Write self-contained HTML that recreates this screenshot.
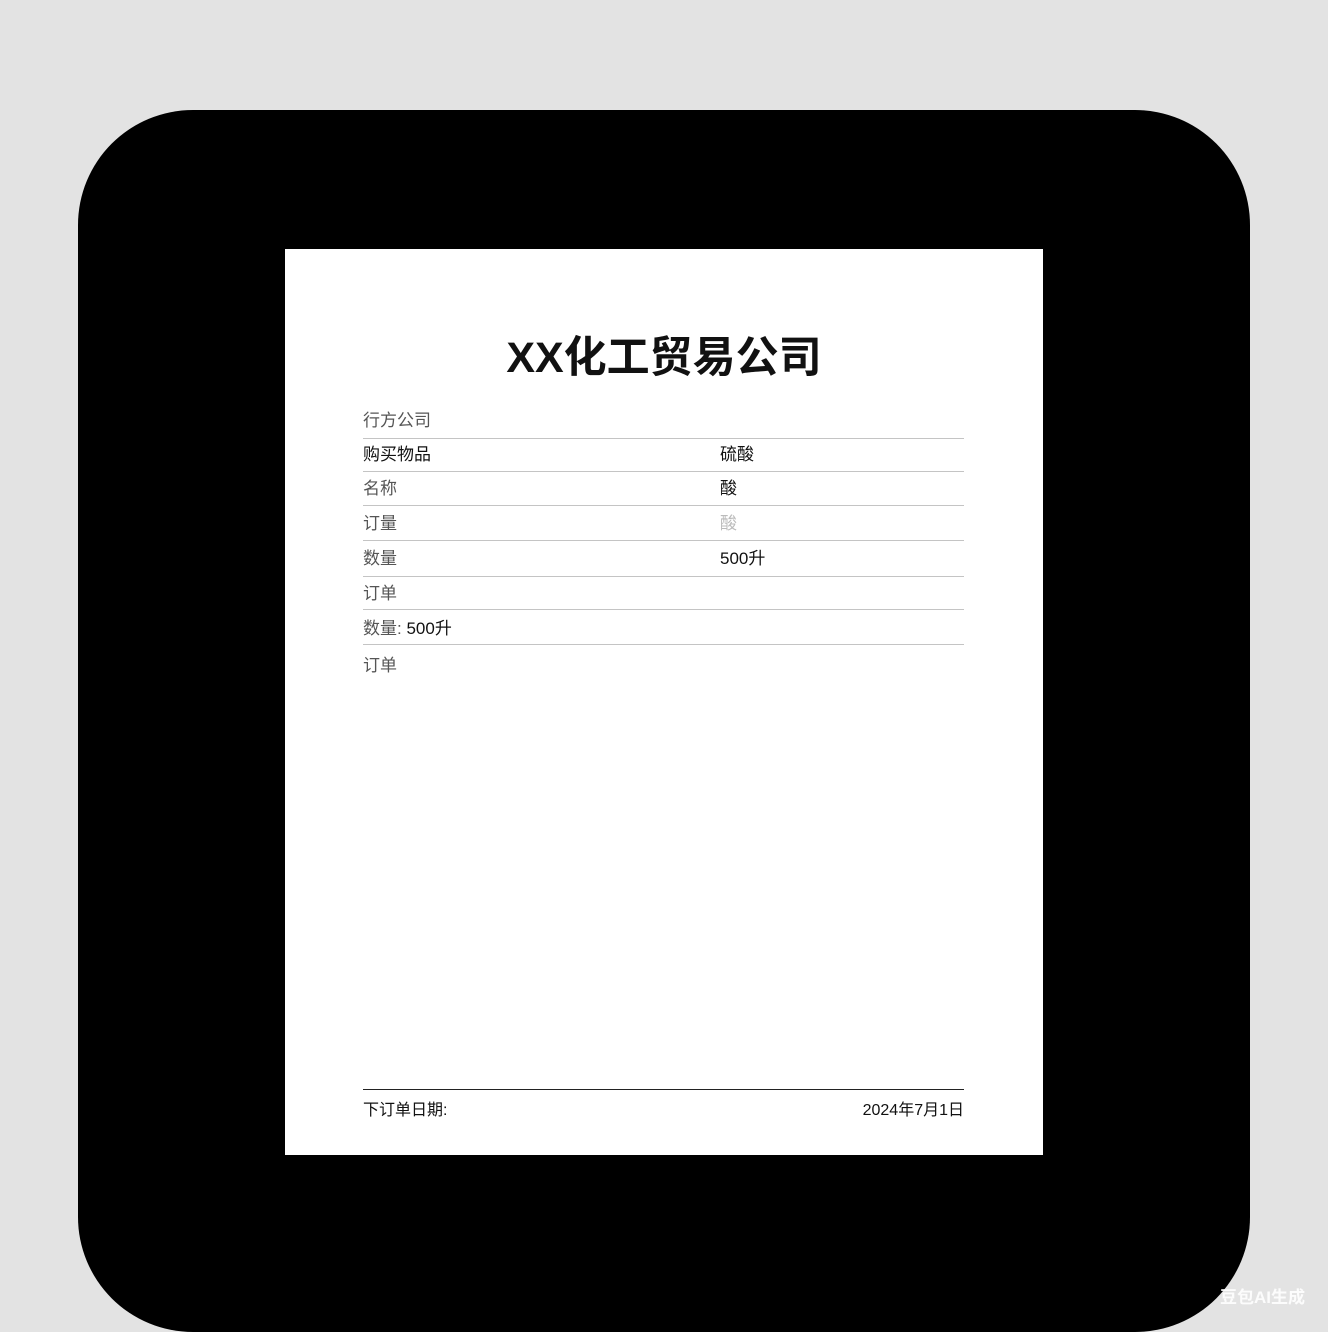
<!DOCTYPE html>
<html><head><meta charset="utf-8"><style>
body{margin:0;width:1328px;height:1328px;background:#e3e3e3;position:relative;overflow:hidden;font-family:"Liberation Sans","Noto Sans CJK SC",sans-serif}
.blk{position:absolute;left:78px;top:110px;width:1172px;height:1222px;background:#000;border-radius:115px}
.paper{position:absolute;left:285px;top:249px;width:758px;height:906px;background:#fff}
.t{position:absolute;left:0;width:100%;top:74px;text-align:center;font-size:43px;font-weight:bold;color:#111;letter-spacing:0px}
.l{position:absolute;left:78px;width:601px;height:1px;background:#c4c4c4}
.x{position:absolute;font-size:17px;line-height:20px;color:#555}
.d{color:#111}
.wm{position:absolute;right:23px;bottom:20px;color:#fff;font-size:17px;font-weight:bold;opacity:.9}
</style></head><body>
<div class="blk"></div>
<div class="paper">
<div class="t">XX化工贸易公司</div>
<div class="x" style="left:78px;top:162px">行方公司</div>
<div class="l" style="top:189px"></div>
<div class="x d" style="left:78px;top:196px">购买物品</div><div class="x d" style="left:435px;top:196px">硫酸</div>
<div class="l" style="top:222px"></div>
<div class="x" style="left:78px;top:230px">名称</div><div class="x d" style="left:435px;top:230px">酸</div>
<div class="l" style="top:256px"></div>
<div class="x" style="left:78px;top:265px">订量</div><div class="x" style="left:435px;top:265px;color:#bbb">酸</div>
<div class="l" style="top:291px"></div>
<div class="x" style="left:78px;top:300px">数量</div><div class="x d" style="left:435px;top:300px">500升</div>
<div class="l" style="top:327px"></div>
<div class="x" style="left:78px;top:335px">订单</div>
<div class="l" style="top:360px"></div>
<div class="x" style="left:78px;top:370px">数量: <span class="d">500升</span></div>
<div class="l" style="top:395px"></div>
<div class="x" style="left:78px;top:407px">订单</div>
<div class="l" style="top:840px;background:#222"></div>
<div class="x d" style="left:78px;top:852px;font-size:16px">下订单日期:</div>
<div class="x d" style="right:79px;top:852px;font-size:16px">2024年7月1日</div>
</div>
<div class="wm">豆包AI生成</div>
</body></html>
